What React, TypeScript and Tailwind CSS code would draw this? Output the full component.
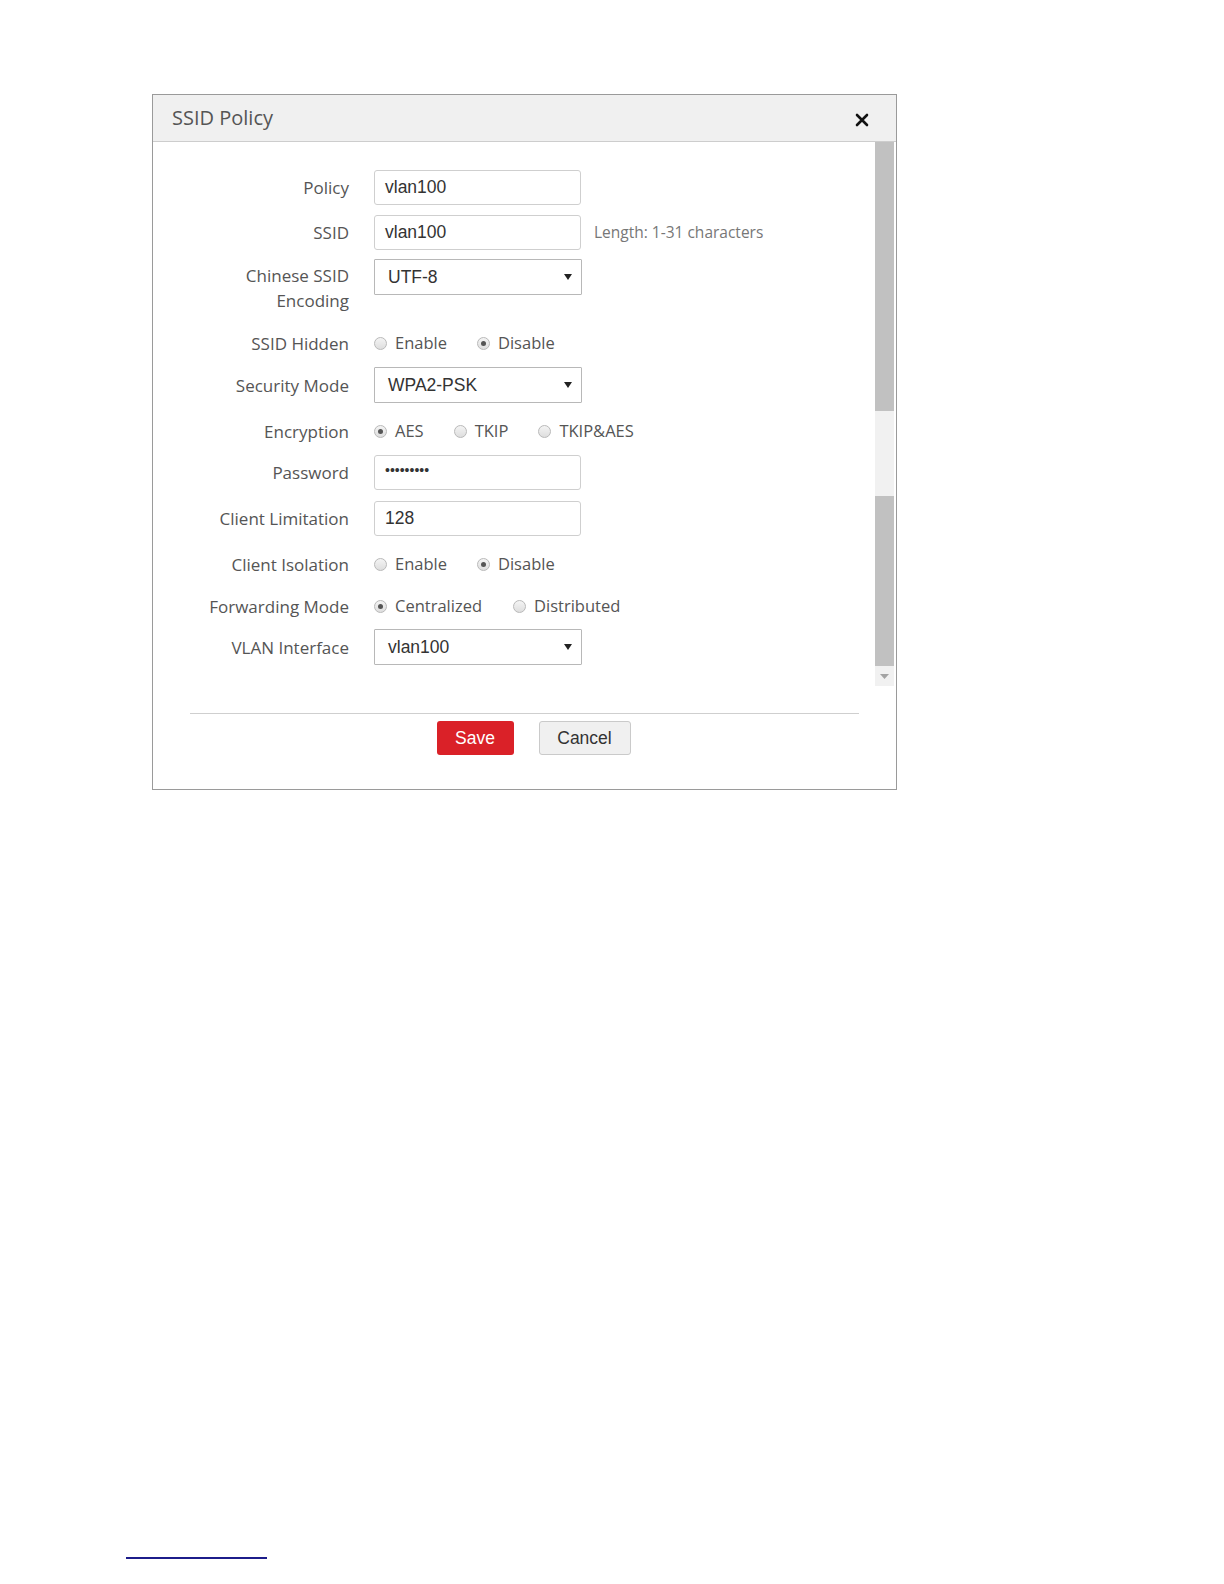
import React from 'react';

const labelFont = { fontFamily: '"Open Sans", "Noto Sans", sans-serif' };
const fieldFont = { fontFamily: '"Liberation Sans", Arial, sans-serif' };

function Radio({ checked, label }: { checked?: boolean; label: string }) {
  return (
    <span className="flex items-center">
      <span className="flex h-[13px] w-[13px] items-center justify-center rounded-full border border-[#b9b9b9] bg-gradient-to-b from-[#f4f4f4] to-[#dedede]">
        {checked && <span className="h-[5px] w-[5px] rounded-full bg-[#555]" />}
      </span>
      <span className="ml-[8px] text-[16.5px] text-[#555]" style={labelFont}>
        {label}
      </span>
    </span>
  );
}

function Row({
  label,
  mt,
  h,
  children,
  top,
}: {
  label: React.ReactNode;
  mt: number;
  h: number;
  children: React.ReactNode;
  top?: boolean;
}) {
  return (
    <div className={`flex ${top ? 'items-start' : 'items-center'}`} style={{ marginTop: mt, height: h }}>
      <div
        className={`w-[196px] shrink-0 text-right text-[17px] leading-[25px] text-[#555] ${top ? 'pt-[4px]' : ''}`}
        style={labelFont}
      >
        {label}
      </div>
      <div className="ml-[25px] flex items-center">{children}</div>
    </div>
  );
}

function TextInput({ value }: { value: string }) {
  return (
    <div
      className="flex h-[35px] w-[207px] items-center rounded-[3px] border border-[#cfcfcf] bg-white px-[10px] text-[17.5px] text-[#333]"
      style={fieldFont}
    >
      {value}
    </div>
  );
}

function Select({ value }: { value: string }) {
  return (
    <div
      className="flex h-[36px] w-[208px] items-center justify-between rounded-[1px] border border-[#b8b8b8] bg-white pl-[13px] pr-[9px] text-[17.5px] text-[#333]"
      style={fieldFont}
    >
      <span>{value}</span>
      <svg width="8" height="6" viewBox="0 0 8 6">
        <path d="M0 0h8L4 6z" fill="#222" />
      </svg>
    </div>
  );
}

export default function App() {
  return (
    <div className="min-h-[1584px] bg-white pl-[152px] pt-[94px]">
      <div className="flex h-[696px] w-[745px] flex-col border border-[#9a9a9a] bg-white">
        <div className="flex h-[47px] shrink-0 items-center justify-between border-b border-[#cdcdcd] bg-[#f0f0f0] pl-[19px] pr-[27px]">
          <span className="text-[20px] text-[#555]" style={labelFont}>
            SSID Policy
          </span>
          <svg width="14" height="14" viewBox="0 0 14 14" className="mt-[4px]">
            <path d="M2 2L12 12M12 2L2 12" stroke="#111" strokeWidth="2.6" strokeLinecap="round" />
          </svg>
        </div>

        <div className="flex h-[544px] shrink-0">
          <div className="flex-1 pt-[28px]">
            <Row label="Policy" mt={0} h={35}>
              <TextInput value="vlan100" />
            </Row>
            <Row label="SSID" mt={10} h={35}>
              <TextInput value="vlan100" />
              <span className="ml-[13px] text-[15.5px] text-[#777]" style={labelFont}>
                Length: 1-31 characters
              </span>
            </Row>
            <Row
              label={
                <>
                  Chinese SSID
                  <br />
                  Encoding
                </>
              }
              mt={9}
              h={52}
              top
            >
              <Select value="UTF-8" />
            </Row>
            <Row label="SSID Hidden" mt={18} h={28}>
              <div className="flex gap-[30px]">
                <Radio label="Enable" />
                <Radio checked label="Disable" />
              </div>
            </Row>
            <Row label="Security Mode" mt={10} h={36}>
              <Select value="WPA2-PSK" />
            </Row>
            <Row label="Encryption" mt={14} h={28}>
              <div className="flex gap-[30px]">
                <Radio checked label="AES" />
                <Radio label="TKIP" />
                <Radio label="TKIP&AES" />
              </div>
            </Row>
            <Row label="Password" mt={10} h={35}>
              <div
                className="flex h-[35px] w-[207px] items-center rounded-[3px] border border-[#cfcfcf] bg-white px-[10px] pb-[4px] text-[14px] text-[#333]"
                style={fieldFont}
              >
                •••••••••
              </div>
            </Row>
            <Row label="Client Limitation" mt={11} h={35}>
              <TextInput value="128" />
            </Row>
            <Row label="Client Isolation" mt={14} h={28}>
              <div className="flex gap-[30px]">
                <Radio label="Enable" />
                <Radio checked label="Disable" />
              </div>
            </Row>
            <Row label="Forwarding Mode" mt={14} h={28}>
              <div className="flex gap-[31px]">
                <Radio checked label="Centralized" />
                <Radio label="Distributed" />
              </div>
            </Row>
            <Row label="VLAN Interface" mt={9} h={36}>
              <Select value="vlan100" />
            </Row>
          </div>

          <div className="mr-[2px] flex w-[19px] flex-col bg-[#f1f1f1]">
            <div className="h-[269px] bg-[#c1c1c1]" />
            <div className="h-[85px]" />
            <div className="h-[170px] bg-[#c1c1c1]" />
            <div className="flex flex-1 items-center justify-center">
              <svg width="9" height="5" viewBox="0 0 9 5">
                <path d="M0 0h9L4.5 5z" fill="#a3a3a3" />
              </svg>
            </div>
          </div>
        </div>

        <div className="mx-[37px] mt-[27px] border-t border-[#cfcfcf]" />
        <div className="mt-[7px] flex justify-center gap-[25px] pl-[18px]">
          <button
            type="button"
            className="h-[34px] w-[77px] rounded-[3px] bg-[#da2128] text-[17.5px] text-white"
            style={fieldFont}
          >
            Save
          </button>
          <button
            type="button"
            className="h-[34px] w-[92px] rounded-[3px] border border-[#cacaca] bg-[#f0f0f0] text-[17.5px] text-[#333]"
            style={fieldFont}
          >
            Cancel
          </button>
        </div>
      </div>

      <div className="ml-[-26px] mt-[767px] h-[2px] w-[141px] bg-[#1c1c8a]" />
    </div>
  );
}
